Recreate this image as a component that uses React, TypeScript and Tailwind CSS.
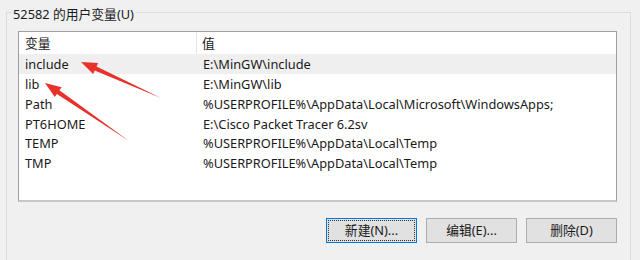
import React from "react";

type P = [number, number];

function arrowPoints(tail: P, tip: P, headLen = 15, headW = 11, shaftW = 4): string {
  const dx = tip[0] - tail[0];
  const dy = tip[1] - tail[1];
  const len = Math.hypot(dx, dy);
  const ux = dx / len;
  const uy = dy / len;
  const px = -uy;
  const py = ux;
  const bx = tip[0] - ux * headLen;
  const by = tip[1] - uy * headLen;
  const pts: P[] = [
    tail,
    [bx + (px * shaftW) / 2, by + (py * shaftW) / 2],
    [bx + (px * headW) / 2, by + (py * headW) / 2],
    tip,
    [bx - (px * headW) / 2, by - (py * headW) / 2],
    [bx - (px * shaftW) / 2, by - (py * shaftW) / 2],
  ];
  return pts.map((p) => `${p[0].toFixed(1)},${p[1].toFixed(1)}`).join(" ");
}

const rows: [string, string][] = [
  ["include", "E:\\MinGW\\include"],
  ["lib", "E:\\MinGW\\lib"],
  ["Path", "%USERPROFILE%\\AppData\\Local\\Microsoft\\WindowsApps;"],
  ["PT6HOME", "E:\\Cisco Packet Tracer 6.2sv"],
  ["TEMP", "%USERPROFILE%\\AppData\\Local\\Temp"],
  ["TMP", "%USERPROFILE%\\AppData\\Local\\Temp"],
];

export default function App() {
  return (
    <div
      className="relative w-[640px] h-[260px] overflow-hidden bg-[#f0f0f0] text-[12.8px] text-[#1a1a1a]"
      style={{ fontFamily: '"Noto Sans", "Noto Sans CJK SC", sans-serif' }}
    >
      <div className="relative mt-[12px] ml-[6px] w-[625px] h-[260px] border border-b-0 border-[#dcdcdc] pt-[18px] pl-[11px]">
        <span className="absolute top-[-8px] left-[4px] bg-[#f0f0f0] px-[2px] leading-[18px]">
          52582 的用户变量(U)
        </span>

        <div className="w-[599px] h-[171px] bg-white border border-[#a0a0a0] border-b-2 border-b-[#c8c8cc] flex flex-col">
          <div className="flex h-[22px] shrink-0 items-center">
            <div className="w-[178px] h-full flex items-center pl-[6px] pt-[1px] border-r border-[#e5e5e5]">变量</div>
            <div className="flex-1 pl-[5px] pt-[1px] flex items-center h-full">值</div>
          </div>
          {rows.map(([k, v], i) => (
            <div
              key={k}
              className={`flex h-[19.75px] items-center shrink-0 pt-[2px] ${i === 0 ? "bg-[#efefef]" : ""}`}
            >
              <div className="w-[178px] pl-[6px] whitespace-nowrap">{k}</div>
              <div className="flex-1 pl-[6px] whitespace-nowrap">{v}</div>
            </div>
          ))}
        </div>

        <div className="flex justify-end gap-[9px] w-[599px] mt-[16px]">
          <button className="w-[91px] h-[25px] bg-[#e1e1e1] border border-[#0078d7] p-[1px]">
            <div className="w-full h-full border border-dotted border-[#333] flex items-center justify-center">
              新建(N)...
            </div>
          </button>
          <button className="w-[91px] h-[25px] bg-[#e1e1e1] border border-[#adadad] flex items-center justify-center">
            编辑(E)...
          </button>
          <button className="w-[91px] h-[25px] bg-[#e1e1e1] border border-[#adadad] flex items-center justify-center">
            删除(D)
          </button>
        </div>
      </div>

      <svg className="absolute left-0 top-0 pointer-events-none" width="640" height="260">
        <polygon points={arrowPoints([161, 98], [81, 62], 16, 12, 4.5)} fill="#e8312a" />
        <polygon points={arrowPoints([129, 141], [45, 83], 16, 12, 4.5)} fill="#e8312a" />
      </svg>
    </div>
  );
}
